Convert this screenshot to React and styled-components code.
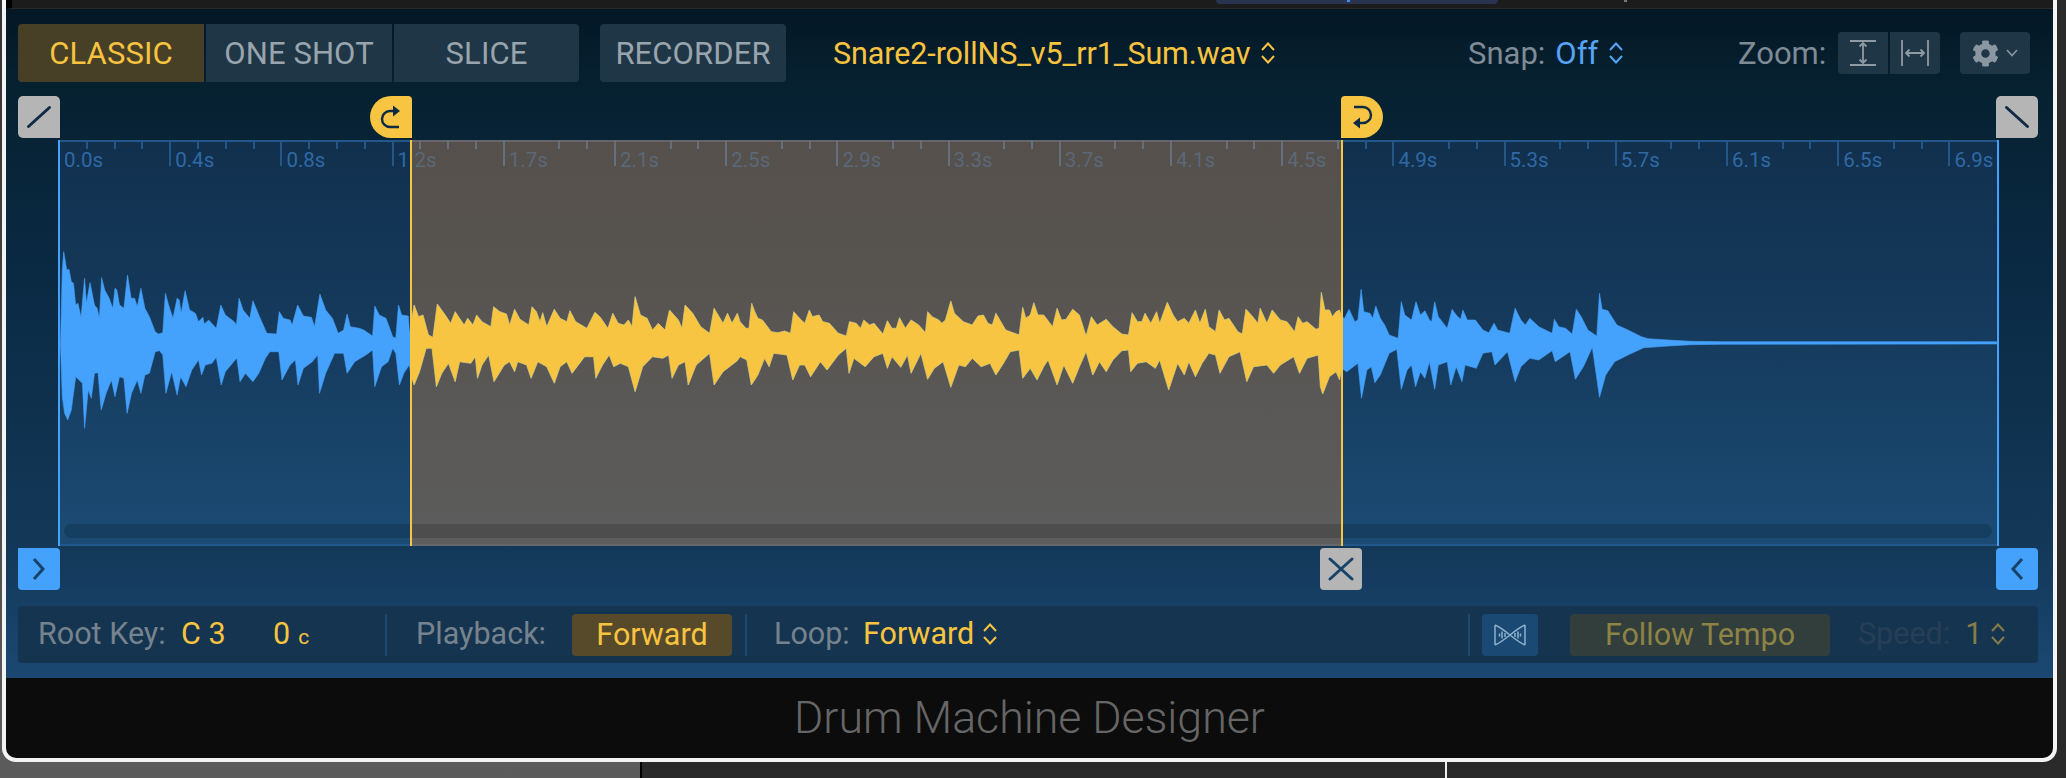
import React from "react";
import styled, { createGlobalStyle } from "styled-components";
import { FaCog } from "react-icons/fa";

const Global = createGlobalStyle`
  html, body { margin: 0; padding: 0; background: #2a2a2a; }
  body { font-family: Roboto, "Liberation Sans", sans-serif; overflow: hidden; }
`;

/* ---------- waveform outline traced from the picture ---------- */
const z6 = (p) => p.map(([x, y]) => [40 + x / 2.24, 230 + y / 3]);
const z7 = (p) => p.map(([x, y]) => [720 + x / 2.24, 260 + y / 3]);
const z8 = (p) => p.map(([x, y]) => [1320 + x / 2.24, 260 + y / 3]);

const top = [
  ...z6([[46,340],[50,120],[53,65],[60,120],[65,118],[70,155],[75,160],[80,225],[85,220],[92,262],[100,145],[104,220],[112,158],[122,225],[128,235],[133,265],[138,143],[145,180],[155,205],[163,235],[168,175],[172,180],[178,225],[188,235],[196,135],[204,205],[212,205],[218,230],[226,175],[235,235],[245,260],[258,305],[265,312],[275,308],[281,190],[288,225],[298,265],[307,205],[312,210],[316,250],[325,182],[335,240],[348,250],[355,275],[365,262],[368,282],[378,270],[395,295],[405,225],[415,255],[435,275],[440,285],[446,205],[455,240],[470,265],[477,212],[490,255],[508,310],[530,312],[536,245],[545,265],[560,270],[565,285],[577,225],[590,258],[608,262],[615,290],[627,192],[640,240],[655,265],[668,310],[680,300],[688,252],[695,290],[715,295],[725,300],[745,318],[750,228],[760,255],[775,265],[790,320],[797,325],[803,225],[810,255],[825,258],[828,310],[838,225],[848,260],[858,255],[870,315],[880,322],[890,222],[905,250],[920,280],[930,245],[945,275],[950,285],[958,265],[970,285],[978,255],[990,275],[1010,290],[1016,230],[1030,245],[1045,252],[1052,285],[1063,238],[1075,268],[1095,285],[1102,230],[1112,245],[1120,275],[1126,248],[1135,290],[1152,238],[1165,265],[1180,275],[1187,242],[1200,275],[1225,295],[1243,247],[1255,262],[1272,295],[1283,250],[1295,280],[1308,285],[1318,270],[1326,290],[1333,200],[1345,255],[1360,265],[1372,300],[1385,280],[1400,300],[1410,240],[1430,270],[1438,295],[1445,225],[1462,250],[1480,290],[1500,310],[1510,235],[1530,280],[1540,250],[1550,280],[1562,250]]),
  ...z7([[45,185],[58,205],[65,205],[71,130],[78,155],[85,175],[95,180],[115,215],[130,218],[145,213],[158,220],[165,155],[178,175],[190,190],[200,150],[207,170],[222,165],[230,185],[245,190],[265,220],[283,228],[290,185],[305,190],[315,205],[322,180],[335,195],[345,190],[365,222],[375,182],[385,205],[395,205],[402,173],[415,205],[428,180],[445,195],[460,218],[465,155],[475,170],[490,180],[497,190],[505,180],[517,123],[525,160],[545,185],[565,195],[578,168],[590,165],[600,190],[610,195],[618,160],[640,210],[670,225],[678,142],[685,175],[695,165],[703,128],[712,165],[725,165],[745,200],[755,145],[765,180],[775,178],[790,148],[805,165],[820,228],[832,170],[845,195],[865,178],[880,200],[900,222],[915,225],[923,158],[935,185],[945,185],[952,160],[965,190],[978,155],[985,190],[1002,127],[1015,165],[1025,185],[1040,175],[1050,190],[1065,150],[1075,190],[1087,148],[1095,200],[1110,215],[1118,150],[1130,180],[1140,175],[1160,215],[1170,222],[1178,148],[1190,165],[1205,190],[1210,145],[1225,190],[1237,150],[1255,180],[1270,185],[1287,215],[1295,170],[1305,190],[1315,185],[1335,208],[1342,205],[1347,97],[1355,150],[1365,150],[1372,170],[1380,155],[1388,150]]),
  ...z8([[48,170],[55,175],[65,148],[78,185],[85,180],[92,88],[98,155],[112,160],[118,175],[125,138],[135,175],[145,195],[155,225],[175,235],[182,125],[190,165],[205,180],[215,125],[225,165],[235,152],[245,180],[250,185],[257,125],[265,170],[285,205],[296,148],[305,165],[315,178],[320,150],[330,180],[348,180],[365,210],[378,218],[390,190],[398,210],[425,220],[437,145],[450,180],[460,195],[470,175],[490,200],[520,220],[525,178],[535,200],[550,205],[565,222],[574,148],[585,170],[600,210],[620,228],[626,100],[632,148],[645,152],[665,195],[690,210],[720,230],[735,236],[780,240],[830,244],[900,245],[1516,245]]),
];
const bottom = [
  ...z6([[46,345],[50,500],[55,550],[62,570],[70,540],[80,440],[95,460],[100,595],[108,480],[115,505],[122,430],[130,428],[137,540],[148,490],[160,450],[168,500],[178,440],[188,445],[195,550],[205,490],[218,450],[226,490],[235,435],[245,430],[258,365],[268,362],[275,375],[282,490],[295,425],[307,495],[315,440],[327,470],[340,420],[355,390],[362,435],[370,405],[385,400],[395,382],[406,465],[415,425],[437,390],[441,385],[448,455],[460,430],[477,455],[490,430],[505,385],[515,365],[535,365],[542,450],[560,405],[572,390],[578,465],[590,415],[610,395],[622,375],[626,490],[640,430],[660,370],[680,370],[688,430],[705,395],[730,375],[745,360],[750,470],[765,410],[780,395],[790,355],[797,370],[805,465],[815,430],[827,405],[832,440],[838,465],[850,425],[865,355],[878,355],[888,470],[900,430],[915,400],[930,455],[940,395],[965,400],[975,380],[980,445],[990,405],[1005,375],[1017,455],[1040,405],[1052,395],[1063,425],[1070,395],[1090,405],[1100,445],[1115,395],[1135,410],[1152,460],[1165,410],[1180,395],[1192,430],[1220,380],[1240,380],[1245,445],[1260,405],[1275,375],[1285,410],[1300,400],[1318,410],[1333,485],[1350,410],[1372,380],[1395,385],[1408,375],[1416,445],[1430,405],[1445,395],[1452,465],[1470,405],[1500,370],[1510,465],[1530,425],[1562,392]]),
  ...z7([[45,290],[60,300],[70,375],[85,345],[100,295],[110,320],[120,280],[150,285],[163,360],[178,315],[190,315],[203,350],[225,305],[240,330],[265,285],[283,265],[289,340],[300,295],[325,320],[345,290],[365,280],[375,325],[385,290],[405,322],[420,285],[428,340],[450,280],[465,358],[480,325],[500,305],[517,382],[535,315],[550,320],[565,295],[585,320],[605,310],[618,345],[635,310],[650,275],[670,270],[678,355],[695,325],[710,360],[725,320],[735,300],[755,375],[770,315],[790,370],[805,320],[820,275],[835,345],[850,305],[865,335],[880,300],[900,272],[915,270],[920,335],[935,310],[955,305],[975,325],[985,300],[1005,390],[1025,310],[1040,345],[1050,305],[1065,350],[1080,310],[1095,280],[1110,285],[1120,340],[1140,290],[1165,275],[1180,365],[1195,320],[1225,315],[1240,340],[1255,315],[1285,290],[1298,340],[1315,295],[1340,285],[1345,380],[1350,402],[1365,350],[1380,335],[1388,360]]),
  ...z8([[48,325],[60,335],[70,325],[85,310],[93,415],[105,330],[115,320],[123,368],[135,345],[155,280],[172,268],[182,388],[195,330],[205,315],[214,380],[225,335],[235,355],[245,305],[257,388],[265,315],[285,305],[293,375],[305,320],[318,365],[325,315],[350,325],[365,280],[385,275],[392,315],[420,275],[437,365],[450,320],[470,295],[490,300],[520,272],[527,305],[560,275],[572,358],[590,320],[610,262],[626,412],[640,345],[660,305],[690,285],[725,263],[780,258],[830,254],[900,253],[1516,252]]),
];
const wavePoints = [...top, ...bottom.slice().reverse()]
  .map(([x, y]) => `${x.toFixed(1)},${y.toFixed(1)}`)
  .join(" ");

const WAVE_LEFT = 58;
const WAVE_RIGHT = 1999;
const WAVE_TOP = 140;
const WAVE_BOTTOM = 546;
const WAVE_W = WAVE_RIGHT - WAVE_LEFT;
const WAVE_H = WAVE_BOTTOM - WAVE_TOP;
const LOOP_A = 410;
const LOOP_B = 1342;

/* ---------- page ---------- */
const Page = styled.div`
  width: 2066px;
  height: 778px;
  position: relative;
  overflow: hidden;
  background:
    linear-gradient(90deg, transparent 0, transparent 640px, #000 640px, #000 642px, #2a2a2a 642px, #2a2a2a 1445px, #eee 1445px, #eee 1447px, #2a2a2a 1447px),
    linear-gradient(180deg, #333 0, #5c5c5c 100%);
`;
const Backdrop = styled.div`
  width: 2055px;
  height: 762px;
  margin-left: 2px;
  box-sizing: border-box;
  border: 4px solid #f4f4f4;
  border-top: none;
  border-radius: 0 0 14px 14px;
  background: #0c0c0c;
  display: flex;
  flex-direction: column;
  overflow: hidden;
`;
const TopStrip = styled.div`
  height: 9px;
  flex: none;
  background: #1c1c1c;
  position: relative;
  border-left: 6px solid #000;
  border-bottom: 1px solid #2a2a2a;
  box-sizing: border-box;
`;
const TopPill = styled.div`
  position: absolute;
  left: 1204px;
  top: 0;
  width: 282px;
  height: 4px;
  background: #2a3450;
  border-radius: 0 0 7px 7px;
`;
const TopDot = styled.div`
  position: absolute;
  left: ${(p) => p.$x - 12}px;
  top: 0;
  width: 3px;
  height: 2px;
  background: ${(p) => p.$c};
`;
const Panel = styled.div`
  height: 669px;
  flex: none;
  box-sizing: border-box;
  padding: 15px 21px 15px 12px;
  display: flex;
  flex-direction: column;
  background: linear-gradient(180deg, #041725 0, #06202f 10%, #0a2a44 40%, #133858 80%, #163e63 88%, #1a4872 100%);
`;
const Toolbar = styled.div`
  height: 58px;
  flex: none;
  display: flex;
  align-items: center;
  color: #8d98a2;
`;
const Segments = styled.div`
  display: flex;
  gap: 2px;
  height: 58px;
  margin-left: ${(p) => p.$ml || 0}px;
`;
const Segment = styled.div`
  width: ${(p) => p.$w}px;
  display: flex;
  align-items: center;
  justify-content: center;
  font-size: 31px;
  letter-spacing: 0.1px;
  background: ${(p) => (p.$on ? "#483f27" : "#1f3646")};
  color: ${(p) => (p.$on ? "#f8c440" : "#9aa4ad")};
  border-radius: ${(p) => p.$r || "0"};
`;
const FileName = styled.div`
  margin-left: 47px;
  display: flex;
  align-items: center;
  gap: 10px;
  font-size: 30.5px;
  letter-spacing: -0.1px;
  color: #f8c440;
  width: 445px;
  flex: none;
  white-space: nowrap;
  svg { flex: none; }
`;
const Snap = styled.div`
  margin-left: 190px;
  display: flex;
  align-items: center;
  font-size: 31px;
  width: 270px;
  flex: none;
  color: #7f8b95;
`;
const Blue = styled.span`
  color: #56a4f5;
  margin: 0 10px;
`;
const ZoomLabel = styled.div`
  font-size: 31px;
  color: #7f8b95;
  width: 100px;
  flex: none;
`;
const ZoomBtn = styled.div`
  width: 50px;
  height: 42px;
  display: flex;
  align-items: center;
  justify-content: center;
  background: #1f3646;
  margin-right: 2px;
  border-radius: ${(p) => p.$r};
`;
const GearBtn = styled.div`
  width: 70px;
  height: 42px;
  margin-left: 18px;
  display: flex;
  align-items: center;
  justify-content: center;
  gap: 7px;
  background: #1f3646;
  border-radius: 4px;
  color: #8b97a0;
`;

/* ---------- editor ---------- */
const Editor = styled.div`
  margin-top: 14px;
  height: 494px;
  width: 2020px;
  flex: none;
  box-sizing: border-box;
  padding: 44px 39px 44px 40px;
  position: relative;
`;
const Wave = styled.div`
  position: relative;
  width: ${WAVE_W}px;
  height: ${WAVE_H}px;
  background: linear-gradient(180deg, #11304e 0, #153a5c 45%, #1b4b74 100%);
  overflow: visible;
`;
const Selection = styled.div`
  position: absolute;
  top: 0;
  bottom: 0;
  left: ${LOOP_A - WAVE_LEFT}px;
  width: ${LOOP_B - LOOP_A}px;
  background: linear-gradient(180deg, #55504b 0, #585552 45%, #5d5d5d 100%);
`;
const EdgeLine = styled.div`
  position: absolute;
  top: 0;
  bottom: 0;
  width: 2px;
  left: ${(p) => p.$x - WAVE_LEFT}px;
  background: ${(p) => p.$c};
`;
const Rail = styled.div`
  position: absolute;
  left: 0;
  right: 0;
  height: 2px;
  background: linear-gradient(90deg, #23578a 0, #23578a ${LOOP_A - WAVE_LEFT}px, #66676a ${LOOP_A - WAVE_LEFT}px, #66676a ${LOOP_B - WAVE_LEFT}px, #23578a ${LOOP_B - WAVE_LEFT}px);
  ${(p) => (p.$bottom ? "bottom: 0;" : "top: 0;")}
`;
const Scrollbar = styled.div`
  position: absolute;
  left: 6px;
  right: 7px;
  top: 384px;
  height: 14px;
  border-radius: 7px;
  background: rgba(0, 0, 0, 0.16);
`;
const WaveSvg = styled.svg`
  position: absolute;
  left: 0;
  top: 0;
  width: ${WAVE_W}px;
  height: ${WAVE_H}px;
`;
const Mark = styled.div`
  position: absolute;
  top: 0;
  width: 2px;
  left: ${(p) => p.$x}px;
  height: ${(p) => (p.$major ? 26 : 9)}px;
  background: ${(p) => (p.$dim ? "#66707c" : "#23578a")};
`;
const Label = styled.div`
  position: absolute;
  top: 8px;
  left: ${(p) => p.$x + 6}px;
  font-size: 20.5px;
  line-height: 24px;
  color: ${(p) => (p.$dim ? "#5a6878" : "#2f69a5")};
  white-space: nowrap;
  span { color: #5a6878; }
`;
const Handle = styled.div`
  position: absolute;
  left: ${(p) => p.$x - 18}px;
  top: ${(p) => p.$y - 96}px;
  width: ${(p) => p.$w || 42}px;
  height: 42px;
  display: flex;
  align-items: center;
  justify-content: center;
  background: ${(p) => p.$bg};
  border-radius: ${(p) => p.$r};
`;

/* ---------- bottom bar ---------- */
const Bar = styled.div`
  margin-top: 16px;
  height: 57px;
  width: 2020px;
  flex: none;
  box-sizing: border-box;
  padding-left: 20px;
  display: flex;
  align-items: center;
  background: #15344f;
  border-radius: 4px;
  font-size: 30.5px;
  color: #75838f;
`;
const Yellow = styled.span`
  color: #f8c440;
`;
const Cell = styled.div`
  width: ${(p) => p.$w}px;
  margin-left: ${(p) => p.$ml || 0}px;
  flex: none;
  display: flex;
  align-items: center;
  white-space: nowrap;
  padding-bottom: 2px;
  box-sizing: content-box;
`;
const Small = styled.span`
  color: #f8c440;
  font-size: 21px;
  margin-left: 8px;
  margin-top: 6px;
`;
const Divider = styled.div`
  width: 2px;
  height: 42px;
  flex: none;
  margin-left: ${(p) => p.$ml || 0}px;
  background: #1f4a70;
`;
const ForwardBtn = styled.div`
  width: 160px;
  height: 42px;
  flex: none;
  display: flex;
  align-items: center;
  justify-content: center;
  background: #574a2b;
  border-radius: 4px;
  color: #f8c440;
`;
const Gap = styled.span`
  width: 8px;
`;
const Spacer = styled.div`
  flex: 1;
`;
const IconTile = styled.div`
  width: 56px;
  height: 42px;
  flex: none;
  margin-left: 12px;
  display: flex;
  align-items: center;
  justify-content: center;
  background: #1a4a74;
  border-radius: 4px;
`;
const FollowBtn = styled.div`
  width: 260px;
  height: 42px;
  flex: none;
  margin-left: 32px;
  display: flex;
  align-items: center;
  justify-content: center;
  background: #323e3c;
  border-radius: 4px;
  color: #8d8346;
`;
const Speed = styled.div`
  margin-left: 28px;
  width: 180px;
  flex: none;
  display: flex;
  align-items: center;
  color: #263f56;
  padding-bottom: 2px;
  span { color: #857c48; margin-left: 15px; margin-right: 8px; }
`;
const Footer = styled.div`
  flex: 1;
  display: flex;
  align-items: center;
  justify-content: center;
  font-size: 44.7px;
  font-weight: 300;
  color: #666;
`;

/* ---------- icons ---------- */
const UpDown = ({ c = "#f8c440", w = 16, h = 24 }) => (
  <svg width={w} height={h} viewBox="0 0 16 24" fill="none" stroke={c} strokeWidth="2">
    <path d="M2 9 L8 2.5 L14 9 M2 15 L8 21.5 L14 15" />
  </svg>
);
const Slash = ({ flip }) => (
  <svg width="26" height="24" viewBox="0 0 26 24" fill="none" stroke="#0e2a44" strokeWidth="3" strokeLinecap="round">
    <path d={flip ? "M2.5 2.5 L23.5 21.5" : "M2.5 21.5 L23.5 2.5"} />
  </svg>
);
const LoopA = () => (
  <svg width="22" height="24" viewBox="0 0 22 24" fill="none" stroke="#0e2a44" strokeWidth="2.4">
    <path d="M13 6 H10 A8 8 0 0 0 10 22 H19" />
    <path d="M13 0.5 L20 6 L13 11.5 Z" fill="#0e2a44" stroke="none" />
  </svg>
);
const LoopB = () => (
  <svg width="22" height="24" viewBox="0 0 22 24" fill="none" stroke="#0e2a44" strokeWidth="2.4">
    <path d="M3 2 H12 A8 8 0 0 1 12 18 H9" />
    <path d="M9 12.5 L2 18 L9 23.5 Z" fill="#0e2a44" stroke="none" />
  </svg>
);
const Chevron = ({ left }) => (
  <svg width="14" height="24" viewBox="0 0 14 24" fill="none" stroke="#17436a" strokeWidth="3">
    <path d={left ? "M12 2 L3 12 L12 22" : "M2 2 L11 12 L2 22"} />
  </svg>
);
const Cross = () => (
  <svg width="26" height="24" viewBox="0 0 26 24" fill="none" stroke="#17436a" strokeWidth="3" strokeLinecap="round">
    <path d="M2 2 L24 22 M24 2 L2 22" />
  </svg>
);
const ZoomV = () => (
  <svg width="28" height="28" viewBox="0 0 28 28" fill="none" stroke="#8f9aa3" strokeWidth="1.8">
    <path d="M1 2 H27 M1 26 H27 M14 4 V24 M10.5 7.5 L14 4 L17.5 7.5 M10.5 20.5 L14 24 L17.5 20.5" />
  </svg>
);
const ZoomH = () => (
  <svg width="30" height="28" viewBox="0 0 30 28" fill="none" stroke="#8f9aa3" strokeWidth="1.8">
    <path d="M2 1 V27 M28 1 V27 M6 14 H24 M9.5 10.5 L6 14 L9.5 17.5 M20.5 10.5 L24 14 L20.5 17.5" />
  </svg>
);
const Caret = () => (
  <svg width="12" height="8" viewBox="0 0 12 8" fill="none" stroke="#8b97a0" strokeWidth="1.6">
    <path d="M1 1 L6 6.5 L11 1" />
  </svg>
);
const Bowtie = () => (
  <svg width="34" height="22" viewBox="0 0 34 22" fill="none" stroke="#8fb0c8" strokeWidth="1.5">
    <path d="M2 1 C12 5 22 17 32 21 M32 1 C22 5 12 17 2 21 M2 1 V21 M32 1 V21" />
    <path d="M6.5 9.5 V12.5 M9 7.5 V14.5 M12 9 V13 M22 9 V13 M25 7.5 V14.5 M27.5 9.5 V12.5" />
  </svg>
);

/* ---------- ruler ---------- */
const LABELS = ["0.0s","0.4s","0.8s",null,"1.7s","2.1s","2.5s","2.9s","3.3s","3.7s","4.1s","4.5s","4.9s","5.3s","5.7s","6.1s","6.5s","6.9s"];
const STEP = 111.2;

const Ruler = () => {
  const items = [];
  LABELS.forEach((text, i) => {
    const x = i * STEP;
    const abs = x + WAVE_LEFT;
    const dim = abs >= LOOP_A && abs < LOOP_B;
    items.push(<Mark key={`m${i}`} $x={x} $major $dim={abs > LOOP_A && abs < LOOP_B} />);
    [1, 2, 3].forEach((n) => {
      if (i >= 4 && n === 1) return;
      if (i === 17) return;
      const mx = x + (n * STEP) / 4;
      const mAbs = mx + WAVE_LEFT;
      items.push(<Mark key={`m${i}-${n}`} $x={mx} $dim={mAbs > LOOP_A && mAbs < LOOP_B} />);
    });
    items.push(
      <Label key={`l${i}`} $x={x} $dim={dim}>
        {text || (<>1.<span>2s</span></>)}
      </Label>
    );
  });
  return <>{items}</>;
};

const Waveform = () => (
  <WaveSvg viewBox={`${WAVE_LEFT} ${WAVE_TOP} ${WAVE_W} ${WAVE_H}`}>
    <defs>
      <clipPath id="loop">
        <rect x={LOOP_A} y={WAVE_TOP} width={LOOP_B - LOOP_A} height={WAVE_H} />
      </clipPath>
    </defs>
    <polygon points={wavePoints} fill="#44a1fc" stroke="#44a1fc" strokeWidth="0.6" strokeLinejoin="round" />
    <polygon points={wavePoints} fill="#f7c542" stroke="#f7c542" strokeWidth="0.6" strokeLinejoin="round" clipPath="url(#loop)" />
  </WaveSvg>
);

export default function App() {
  return (
    <Page>
      <Global />
      <Backdrop>
        <TopStrip>
          <TopPill />
          <TopDot $x={1347} $c="#3f8ff0" />
          <TopDot $x={1624} $c="#777" />
        </TopStrip>
        <Panel>
          <Toolbar>
            <Segments>
              <Segment $w={186} $on $r="4px 0 0 4px">CLASSIC</Segment>
              <Segment $w={186}>ONE SHOT</Segment>
              <Segment $w={185} $r="0 4px 4px 0">SLICE</Segment>
            </Segments>
            <Segments $ml={21}>
              <Segment $w={186} $r="4px">RECORDER</Segment>
            </Segments>
            <FileName>Snare2-rollNS_v5_rr1_Sum.wav <UpDown /></FileName>
            <Snap>Snap:<Blue>Off</Blue><UpDown c="#56a4f5" /></Snap>
            <ZoomLabel>Zoom:</ZoomLabel>
            <ZoomBtn $r="4px 0 0 4px"><ZoomV /></ZoomBtn>
            <ZoomBtn $r="0 4px 4px 0"><ZoomH /></ZoomBtn>
            <GearBtn><FaCog size={27} /><Caret /></GearBtn>
          </Toolbar>
          <Editor>
            <Handle $x={18} $y={96} $bg="#b5b5b5" $r="5px 5px 0 5px"><Slash /></Handle>
            <Handle $x={370} $y={96} $bg="#f7c542" $r="21px 4px 0 21px"><LoopA /></Handle>
            <Handle $x={1341} $y={96} $bg="#f7c542" $r="4px 21px 21px 0"><LoopB /></Handle>
            <Handle $x={1996} $y={96} $bg="#b5b5b5" $r="5px 5px 5px 0"><Slash flip /></Handle>
            <Wave>
              <Selection />
              <Rail />
              <Rail $bottom />
              <Ruler />
              <Scrollbar />
              <Waveform />
              <EdgeLine $x={58} $c="#44a1fc" />
              <EdgeLine $x={1997} $c="#44a1fc" />
              <EdgeLine $x={410} $c="#f7c542" />
              <EdgeLine $x={1341} $c="#f7c542" />
            </Wave>
            <Handle $x={18} $y={548} $bg="#44a1fc" $r="0 4px 4px 4px"><Chevron /></Handle>
            <Handle $x={1320} $y={548} $bg="#b5b5b5" $r="4px"><Cross /></Handle>
            <Handle $x={1996} $y={548} $bg="#44a1fc" $r="4px"><Chevron left /></Handle>
          </Editor>
          <Bar>
            <Cell $w={143}>Root Key:</Cell>
            <Cell $w={92}><Yellow>C 3</Yellow></Cell>
            <Cell $w={112}><Yellow>0</Yellow><Small>c</Small></Cell>
            <Divider />
            <Cell $w={156} $ml={29}>Playback:</Cell>
            <ForwardBtn>Forward</ForwardBtn>
            <Divider $ml={13} />
            <Cell $w={89} $ml={27}>Loop:</Cell>
            <Cell $w={160}><Yellow>Forward</Yellow><Gap /><UpDown /></Cell>
            <Spacer />
            <Divider />
            <IconTile><Bowtie /></IconTile>
            <FollowBtn>Follow Tempo</FollowBtn>
            <Speed>Speed:<span>1</span><UpDown c="#857c48" /></Speed>
          </Bar>
        </Panel>
        <Footer>Drum Machine Designer</Footer>
      </Backdrop>
    </Page>
  );
}
